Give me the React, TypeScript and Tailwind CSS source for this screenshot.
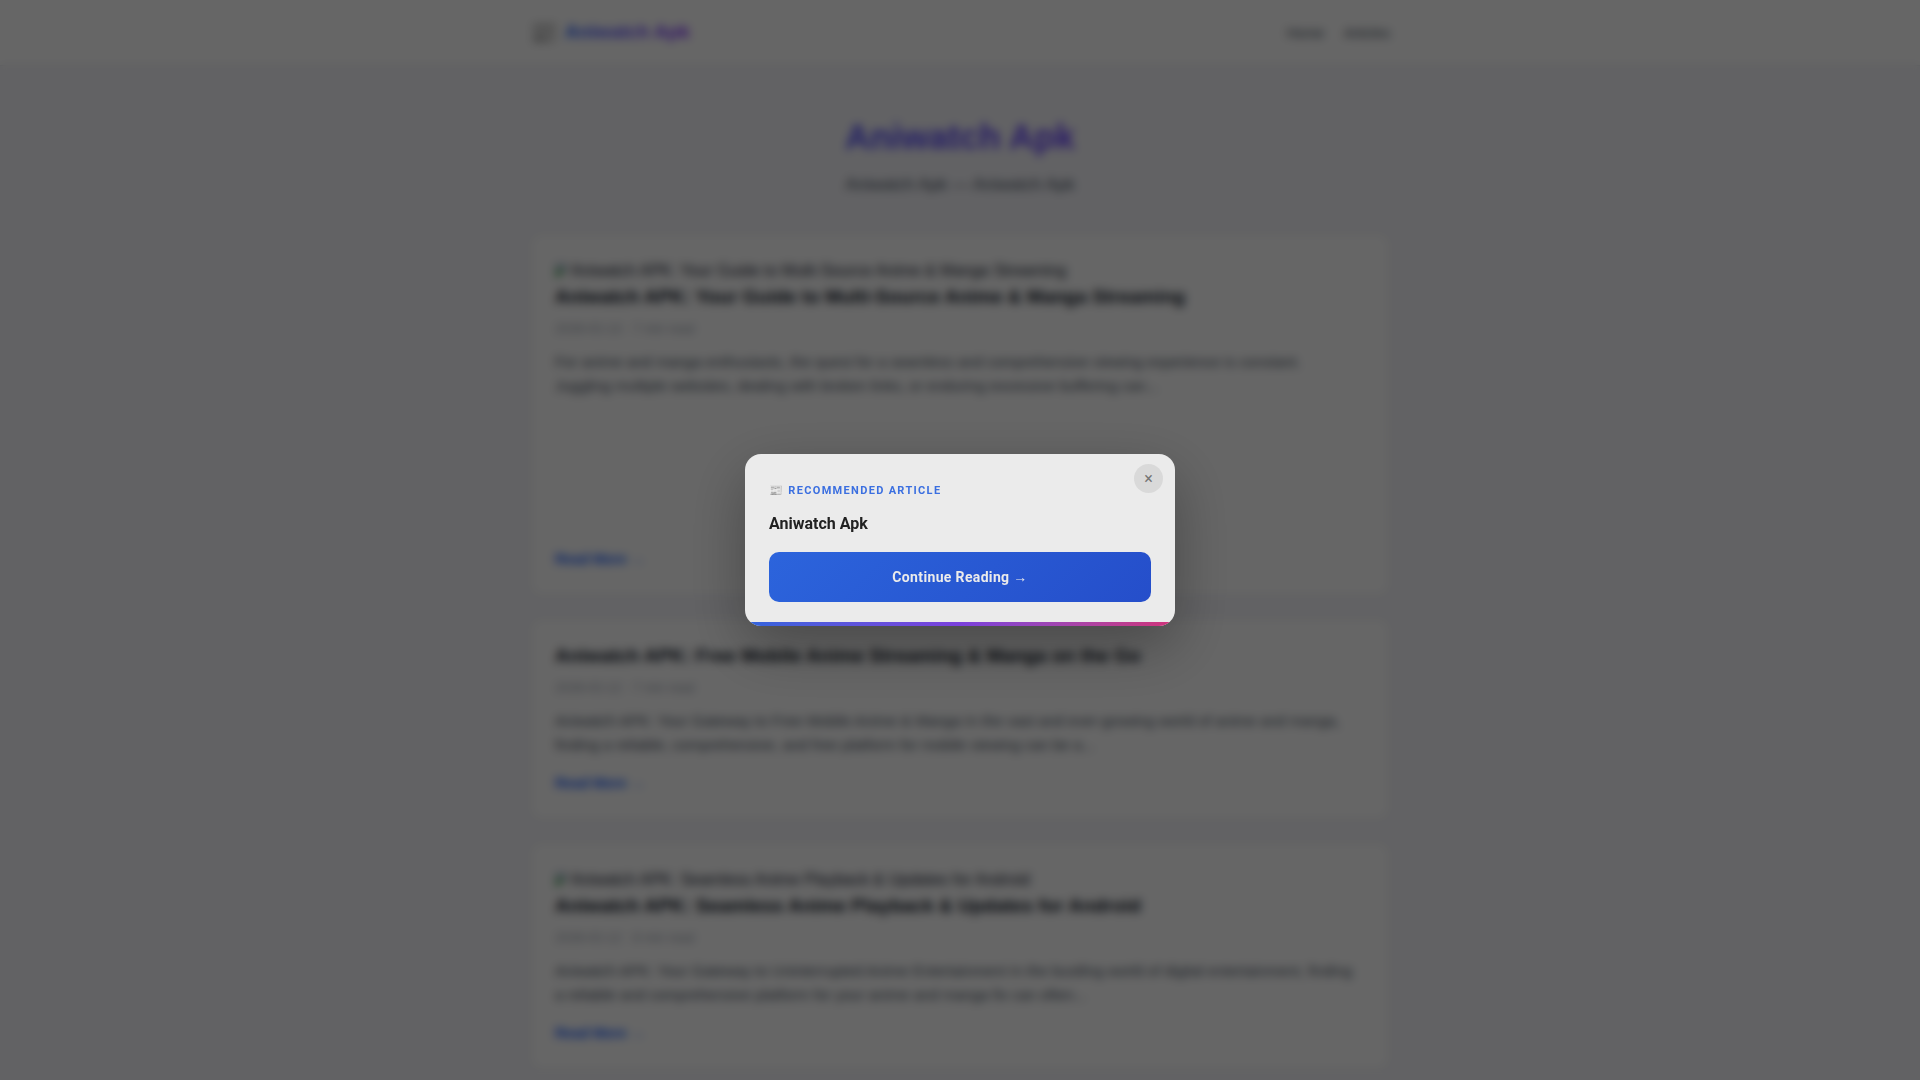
import React, { useState } from 'react';

interface Article {
  title: string;
  date: string;
  readTime: string;
  excerpt: string;
  thumb?: boolean;
  tall?: boolean;
}

const articles: Article[] = [
  {
    title: 'Aniwatch APK: Your Guide to Multi-Source Anime & Manga Streaming',
    date: '2026-02-13',
    readTime: '7 min read',
    excerpt:
      'For anime and manga enthusiasts, the quest for a seamless and comprehensive viewing experience is constant.\nJuggling multiple websites, dealing with broken links, or enduring excessive buffering can...',
    thumb: true,
    tall: true,
  },
  {
    title: 'Aniwatch APK: Free Mobile Anime Streaming & Manga on the Go',
    date: '2026-02-12',
    readTime: '7 min read',
    excerpt:
      'Aniwatch APK: Your Gateway to Free Mobile Anime & Manga In the vast and ever-growing world of anime and manga,\nfinding a reliable, comprehensive, and free platform for mobile viewing can be a...',
  },
  {
    title: 'Aniwatch APK: Seamless Anime Playback & Updates for Android',
    date: '2026-02-12',
    readTime: '8 min read',
    excerpt:
      'Aniwatch APK: Your Gateway to Uninterrupted Anime Entertainment In the bustling world of digital entertainment, finding\na reliable and comprehensive platform for your anime and manga fix can often...',
    thumb: true,
  },
];

const Thumbnail: React.FC<{ alt: string }> = ({ alt }) => (
  <div className="flex h-[26px] items-center text-gray-800">
    <svg width="16" height="16" viewBox="0 0 16 16" className="shrink-0">
      <path d="M1 1h10l4 4L1 15z" fill="#c6d8f5" stroke="#9aa0a6" />
      <path d="M1 15V8l4-3 4 3z" fill="#4caf50" />
      <path d="M11 1v4h4" fill="#fff" stroke="#9aa0a6" />
    </svg>
    <span>{alt}</span>
  </div>
);

const ArticleCard: React.FC<{ article: Article }> = ({ article }) => (
  <article className="flex flex-col rounded-xl border border-gray-200 bg-white p-6">
    {article.thumb && <Thumbnail alt={article.title} />}
    <h2 className="text-[19px] leading-[26px] font-bold text-gray-900">{article.title}</h2>
    <p className="mt-2 text-[13px] leading-[22px] text-gray-400">
      {article.date} · {article.readTime}
    </p>
    <p className="mt-2.5 text-[15px] leading-6 whitespace-pre-line text-gray-600">
      {article.excerpt}
    </p>
    {article.tall && <div className="h-[135px]" />}
    <a href="#" className="mt-3.5 self-start text-sm leading-6 font-semibold text-blue-600">
      Read More →
    </a>
  </article>
);

const RecommendedModal: React.FC<{ onClose: () => void }> = ({ onClose }) => (
  <div className="fixed inset-0 z-50 flex items-center justify-center bg-black/60 p-5 backdrop-blur-[5px]">
    <div
      role="dialog"
      aria-labelledby="recommended-title"
      className="relative w-full max-w-[430px] overflow-hidden rounded-2xl bg-[#ebebeb] px-6 pt-7 pb-6 font-[Roboto,'Liberation_Sans',sans-serif] shadow-[0_20px_60px_rgba(0,0,0,0.3)]"
    >
      <button
        type="button"
        aria-label="Close"
        onClick={onClose}
        className="absolute top-[10px] right-3 flex size-[29px] items-center justify-center rounded-full bg-[#d9d9d9] text-base text-[#757575]"
      >
        ×
      </button>
      <p className="text-[11px] leading-[18px] font-bold tracking-[0.12em] text-[#3b6fe0] uppercase">
        📰 Recommended Article
      </p>
      <h3 id="recommended-title" className="mt-3 text-base leading-6 font-bold text-[#222]">
        Aniwatch Apk
      </h3>
      <button
        type="button"
        className="mt-4 h-[50px] w-full rounded-[10px] bg-linear-135 from-[#2c64dc] to-[#254eca] text-sm font-bold tracking-wide text-[#ebebeb]"
      >
        Continue Reading →
      </button>
      <div className="absolute inset-x-0 bottom-0 h-1 bg-linear-to-r from-[#2f64dc] via-[#7a40dc] to-[#d03078]" />
    </div>
  </div>
);

export default function App() {
  const [open, setOpen] = useState(true);

  return (
    <div className="h-screen overflow-hidden bg-[#f5f5fa] font-['Liberation_Sans',sans-serif]">
      <header className="border-b border-gray-200 bg-white">
        <div className="mx-auto flex h-[65px] max-w-[860px] items-center justify-between">
          <a href="#" className="flex items-center gap-2 text-[19px] font-bold">
            <span className="text-[22px]">📰</span>
            <span className="bg-linear-to-r from-blue-600 to-violet-600 bg-clip-text text-transparent">
              Aniwatch Apk
            </span>
          </a>
          <nav className="flex gap-5 text-sm font-medium text-gray-600">
            <a href="#">Home</a>
            <a href="#">Articles</a>
          </nav>
        </div>
      </header>

      <main className="mx-auto max-w-[860px]">
        <section className="pt-12 pb-[33px] text-center">
          <h1 className="bg-linear-to-r from-blue-600 to-violet-600 bg-clip-text text-[35px] leading-[46px] font-extrabold text-transparent">
            Aniwatch Apk
          </h1>
          <p className="mt-2.5 text-[17px] leading-[30px] text-gray-600">Aniwatch Apk — Aniwatch Apk</p>
        </section>
        <div className="flex flex-col gap-[22px]">
          {articles.map((article) => (
            <ArticleCard key={article.title} article={article} />
          ))}
        </div>
      </main>

      {open && <RecommendedModal onClose={() => setOpen(false)} />}
    </div>
  );
}
